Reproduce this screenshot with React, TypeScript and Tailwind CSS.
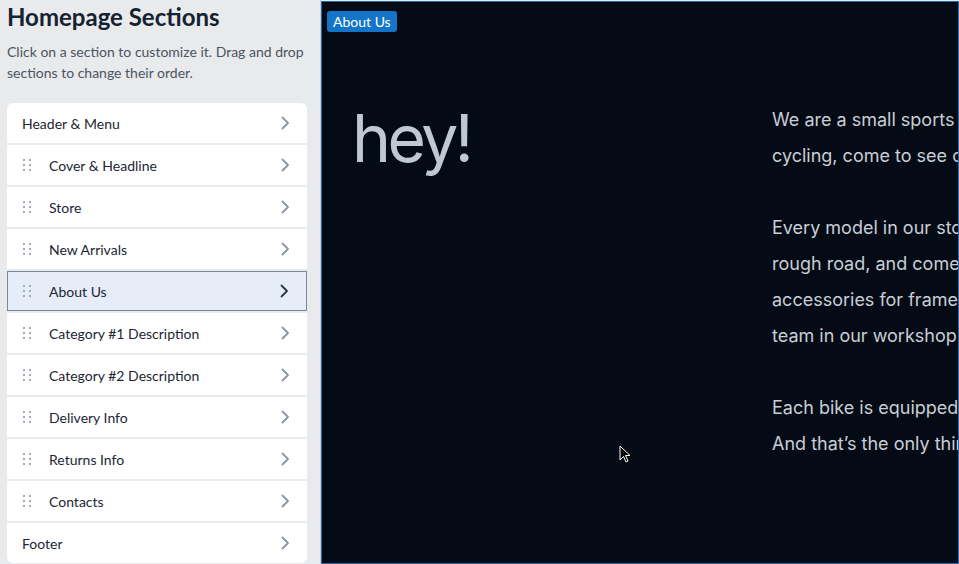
import React from 'react';

const sections = [
  { name: 'Header & Menu', drag: false },
  { name: 'Cover & Headline', drag: true },
  { name: 'Store', drag: true },
  { name: 'New Arrivals', drag: true },
  { name: 'About Us', drag: true, active: true },
  { name: 'Category #1 Description', drag: true },
  { name: 'Category #2 Description', drag: true },
  { name: 'Delivery Info', drag: true },
  { name: 'Returns Info', drag: true },
  { name: 'Contacts', drag: true },
  { name: 'Footer', drag: false },
];

const paragraphs = [
  ['We are a small sports and bike shop. If you love', 'cycling, come to see our collection of bikes.'],
  [
    'Every model in our store has been tested on a long',
    'rough road, and comes with a full set of tools and',
    'accessories for frame care. Ask our friendly service',
    'team in our workshop about tuning and repairs.',
  ],
  ['Each bike is equipped with a lifetime warranty.', 'And that’s the only thing you will never need.'],
];

function DragHandle() {
  return (
    <svg width="10" height="14" viewBox="0 0 10 14" className="shrink-0">
      {[0, 1].map((c) =>
        [0, 1, 2].map((r) => (
          <rect key={`${c}-${r}`} x={1 + c * 6} y={1 + r * 5} width="2" height="2" fill="#a3abb6" />
        ))
      )}
    </svg>
  );
}

function Chevron({ dark }: { dark?: boolean }) {
  return (
    <svg width="10" height="14" viewBox="0 0 10 14" fill="none" className="shrink-0">
      <path d="M2.5 1.5 L8 7 L2.5 12.5" stroke={dark ? '#2c3646' : '#8b95a3'} strokeWidth="1.8" strokeLinecap="round" strokeLinejoin="round" />
    </svg>
  );
}

export default function App() {
  return (
    <div className="flex h-[564px] w-[959px] overflow-hidden bg-[#e9eaec]" style={{ fontFamily: 'Lato, "Open Sans", sans-serif' }}>
      <aside className="w-[321px] shrink-0 px-[7px] border-r border-[#c9cdd3]">
        <h1 className="mt-0 text-[24px] font-bold leading-[34px] text-[#152232]">Homepage Sections</h1>
        <p className="mt-[7px] text-[14px] leading-[21px] text-[#4b5462]">
          Click on a section to customize it. Drag and drop sections to change their order.
        </p>
        <ul className="mt-[20px] flex w-[300px] flex-col gap-[2px]">
          {sections.map((s, i) => (
            <li
              key={s.name}
              className={`flex h-[40px] items-center pl-[15px] pr-[17px] text-[14px] text-[#1c2634] ${
                s.active ? 'border border-[#7b879a] bg-[#e6edf9]' : 'bg-white'
              } ${i === 0 ? 'rounded-t-[6px]' : ''} ${i === sections.length - 1 ? 'rounded-b-[6px]' : ''}`}
            >
              {s.drag ? (
                <div className={`flex items-center gap-[17px] ${s.active ? 'ml-[-1px]' : ''}`}>
                  <DragHandle />
                  <span>{s.name}</span>
                </div>
              ) : (
                <span>{s.name}</span>
              )}
              <span className="ml-auto">
                <Chevron dark={s.active} />
              </span>
            </li>
          ))}
        </ul>
      </aside>

      <main className="relative flex-1 border-[1.5px] border-[#2668ab] bg-[#040b15] mt-[1px] overflow-hidden">
        <div className="absolute left-[5px] top-[9px] rounded-[3px] bg-[#1475c8] px-[6px] text-[14px] leading-[21px] text-white">
          About Us
        </div>
        <div className="flex pt-[100px] pl-[30px]" style={{ fontFamily: 'Inter, "Open Sans", sans-serif' }}>
          <div className="w-[420px] shrink-0 text-[66px] font-normal leading-[72px] tracking-[-3.5px] text-[#c0c8d2]">hey!</div>
          <div className="flex flex-col gap-[36px] text-[18px] leading-[36px] text-[#c9ced6] whitespace-nowrap">
            {paragraphs.map((p, i) => (
              <div key={i}>
                {p.map((line) => (
                  <div key={line}>{line}</div>
                ))}
              </div>
            ))}
          </div>
        </div>
        <svg className="absolute left-[297px] top-[443px]" width="12" height="19" viewBox="0 0 12 19">
          <path d="M1 1 L1 15 L4.5 11.5 L7 17 L9 16 L6.5 10.5 L11 10.5 Z" fill="#000" stroke="#fff" strokeWidth="1" strokeLinejoin="round" />
        </svg>
      </main>
    </div>
  );
}
